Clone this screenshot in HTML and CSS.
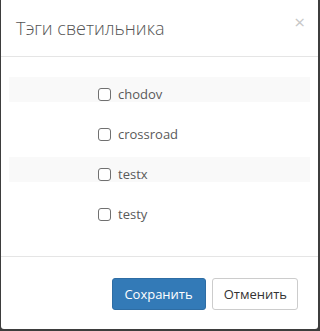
FILE: index.html
```
<!DOCTYPE html>
<html>
  <head>
    <meta charset="utf-8">
    <title>Тэги светильника</title>
    <link rel="stylesheet" href="styles.css">
  </head>
  <body>
    <div class="modal">
      <div class="modal-header">
        <h4 class="modal-title">Тэги светильника</h4>
        <span class="close">&times;</span>
      </div>
      <div class="modal-body">
        <div class="tag-row striped">
          <label class="tag"><span class="box"></span>chodov</label>
        </div>
        <div class="tag-row">
          <label class="tag"><span class="box"></span>crossroad</label>
        </div>
        <div class="tag-row striped">
          <label class="tag"><span class="box"></span>testx</label>
        </div>
        <div class="tag-row">
          <label class="tag"><span class="box"></span>testy</label>
        </div>
      </div>
      <div class="modal-footer">
        <button class="btn btn-primary">Сохранить</button>
        <button class="btn btn-default">Отменить</button>
      </div>
    </div>
  </body>
</html>
```

FILE: styles.css
```
*{
  margin: 0;
  padding: 0;
  box-sizing: border-box;
}
body{
  background: #3d3d3d;
  font-family: "Open Sans", "Liberation Sans", sans-serif;
  color: #555;
}
.modal{
  margin-left: 1px;
  width: 317px;
  height: 329px;
  background: #fff;
  border-radius: 0 0 3px 3px;
}
.modal-header{
  position: relative;
  height: 57px;
  border-bottom: 1px solid #e5e5e5;
  padding: 14px 15px 0;
}
.modal-title{
  font-size: 18px;
  font-weight: 300;
  line-height: 28px;
  color: #555;
}
.close{
  position: absolute;
  right: 13px;
  top: 12px;
  font-size: 19px;
  line-height: 20px;
  color: #c8c8c8;
}
.modal-body{
  padding: 20px 8px 19px;
}
.tag-row{
  height: 25px;
  margin-bottom: 15px;
}
.striped{
  background: #f9f9f9;
}
.tag{
  display: flex;
  align-items: center;
  padding: 8px 0 0 89px;
  font-size: 13px;
  line-height: 18px;
  color: #5a5a5a;
}
.box{
  width: 13px;
  height: 13px;
  border: 1px solid #707070;
  border-radius: 3px;
  margin-right: 7px;
  background: #fff;
}
.modal-footer{
  display: flex;
  justify-content: flex-end;
  gap: 6px;
  border-top: 1px solid #e5e5e5;
  padding: 21px 20px 19px;
}
.btn{
  font-family: "Open Sans", "Liberation Sans", sans-serif;
  font-size: 13px;
  line-height: 18px;
  padding: 6px 12px 6px 11px;
  border: 1px solid;
  border-radius: 3px;
}
.btn-primary{
  background: #337ab7;
  border-color: #2e6da4;
  color: #fff;
}
.btn-default{
  background: #fff;
  border-color: #ccc;
  color: #333;
  padding: 6px 10px 6px 11px;
}
```
